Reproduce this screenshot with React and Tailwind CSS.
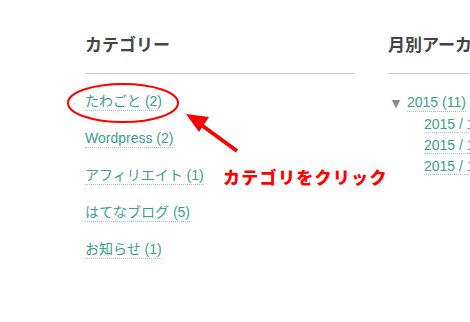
export default function App() {
  const font = { fontFamily: '"Liberation Sans", "Noto Sans CJK JP", sans-serif' };
  const cats = ["たわごと (2)", "Wordpress (2)", "アフィリエイト (1)", "はてなブログ (5)", "お知らせ (1)"];
  return (
    <div className="relative w-[470px] h-[322px] bg-white overflow-hidden" style={font}>
      <div className="flex pt-[36px] pl-[85px] gap-[33px]">
        <div className="w-[270px] shrink-0">
          <div className="text-[17px] leading-[20px] font-bold text-[#444] pb-[17px] border-b border-[#ccc]">カテゴリー</div>
          <div className="flex flex-col items-start gap-[18px] mt-[18px]">
            {cats.map((c) => (
              <span key={c} className="block text-[14px] leading-[18px] text-[#3ba08f] border-b border-dotted border-[#9cc9c2]">{c}</span>
            ))}
          </div>
        </div>
        <div className="w-[270px] shrink-0">
          <div className="text-[17px] leading-[20px] font-bold text-[#444] pb-[17px] border-b border-[#ccc] whitespace-nowrap">月別アーカイブ</div>
          <div className="mt-[19px] flex items-center h-[19px]">
            <span className="text-[14px] text-[#888] w-[19px] pl-[1px] leading-[18px]">▼</span>
            <span className="block text-[14px] leading-[18px] text-[#3ba08f] border-b border-dotted border-[#9cc9c2] whitespace-nowrap">2015 (11)</span>
          </div>
          <div className="flex flex-col items-start gap-[4px] mt-[4px] pl-[36px]">
            {["2015 / 12 (2)", "2015 / 11 (5)", "2015 / 10 (4)"].map((c) => (
              <span key={c} className="block text-[14px] leading-[16px] text-[#3ba08f] border-b border-dotted border-[#9cc9c2] whitespace-nowrap">{c}</span>
            ))}
          </div>
        </div>
      </div>
      <svg className="absolute left-0 top-0" width="470" height="322">
        <ellipse cx="123" cy="103" rx="55" ry="19" fill="none" stroke="#ff0000" strokeWidth="2" />
        <line x1="237" y1="151" x2="200" y2="124" stroke="#ff0000" strokeWidth="4" />
        <polygon points="186,114 209,117 199,132" fill="#ff0000" />
      </svg>
      <div className="absolute left-[223px] top-[165px] text-[17px] leading-[24px] font-black text-[#ff0000] tracking-[1.3px]" style={{ fontFamily: '"Noto Sans CJK JP", sans-serif' }}>
        カテゴリをクリック
      </div>
    </div>
  );
}
